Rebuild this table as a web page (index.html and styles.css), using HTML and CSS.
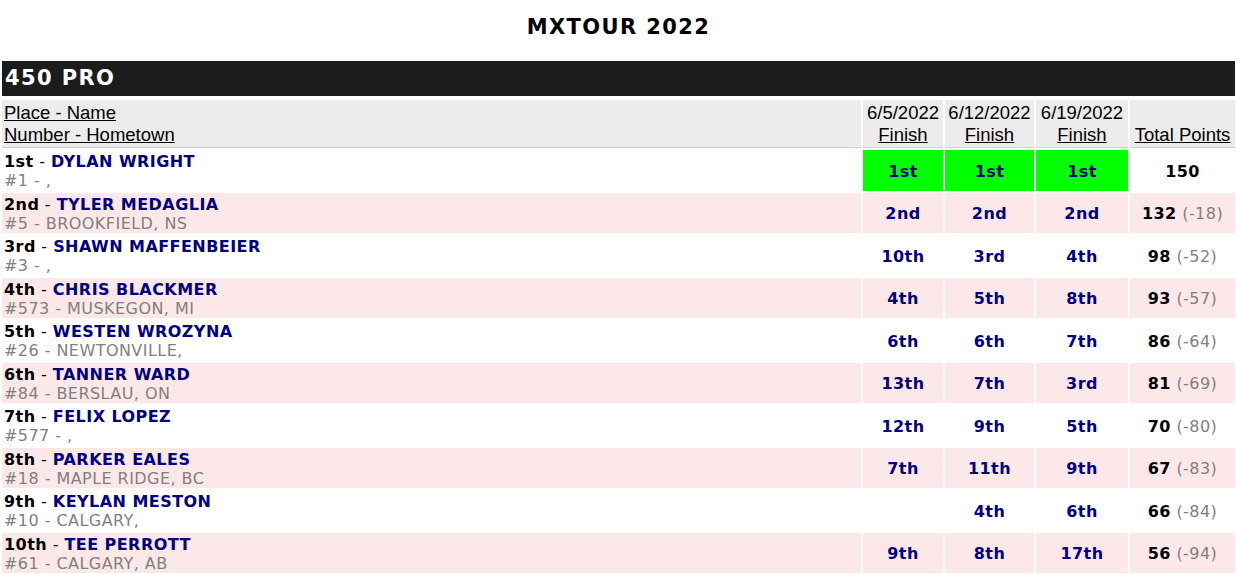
FILE: index.html
```html
<!DOCTYPE html>
<html lang="en">
<head>
<meta charset="utf-8">
<title>MXTOUR 2022</title>
<link rel="stylesheet" href="styles.css">
</head>
<body>
<h1 class="page-title">MXTOUR 2022</h1>
<h2 class="class-bar">450 PRO</h2>
<table class="standings">
  <colgroup>
    <col>
    <col class="c-r1">
    <col class="c-r2">
    <col class="c-r3">
    <col class="c-tot">
  </colgroup>
  <thead>
    <tr>
      <th class="h-name"><a href="#">Place - Name</a><br><a href="#">Number - Hometown</a></th>
      <th>6/5/2022<br><a href="#">Finish</a></th>
      <th>6/12/2022<br><a href="#">Finish</a></th>
      <th>6/19/2022<br><a href="#">Finish</a></th>
      <th><a href="#">Total Points</a></th>
    </tr>
  </thead>
  <tbody>
    <tr>
      <td class="rider"><b>1st</b> - <span class="nm">DYLAN WRIGHT</span><br><span class="ht">#1 - ,</span></td>
      <td class="fin win">1st</td><td class="fin win">1st</td><td class="fin win">1st</td>
      <td class="tot"><b>150</b></td>
    </tr>
    <tr class="alt">
      <td class="rider"><b>2nd</b> - <span class="nm">TYLER MEDAGLIA</span><br><span class="ht">#5 - BROOKFIELD, NS</span></td>
      <td class="fin">2nd</td><td class="fin">2nd</td><td class="fin">2nd</td>
      <td class="tot"><b>132</b> <span class="diff">(-18)</span></td>
    </tr>
    <tr>
      <td class="rider"><b>3rd</b> - <span class="nm">SHAWN MAFFENBEIER</span><br><span class="ht">#3 - ,</span></td>
      <td class="fin">10th</td><td class="fin">3rd</td><td class="fin">4th</td>
      <td class="tot"><b>98</b> <span class="diff">(-52)</span></td>
    </tr>
    <tr class="alt">
      <td class="rider"><b>4th</b> - <span class="nm">CHRIS BLACKMER</span><br><span class="ht">#573 - MUSKEGON, MI</span></td>
      <td class="fin">4th</td><td class="fin">5th</td><td class="fin">8th</td>
      <td class="tot"><b>93</b> <span class="diff">(-57)</span></td>
    </tr>
    <tr>
      <td class="rider"><b>5th</b> - <span class="nm">WESTEN WROZYNA</span><br><span class="ht">#26 - NEWTONVILLE,</span></td>
      <td class="fin">6th</td><td class="fin">6th</td><td class="fin">7th</td>
      <td class="tot"><b>86</b> <span class="diff">(-64)</span></td>
    </tr>
    <tr class="alt">
      <td class="rider"><b>6th</b> - <span class="nm">TANNER WARD</span><br><span class="ht">#84 - BERSLAU, ON</span></td>
      <td class="fin">13th</td><td class="fin">7th</td><td class="fin">3rd</td>
      <td class="tot"><b>81</b> <span class="diff">(-69)</span></td>
    </tr>
    <tr>
      <td class="rider"><b>7th</b> - <span class="nm">FELIX LOPEZ</span><br><span class="ht">#577 - ,</span></td>
      <td class="fin">12th</td><td class="fin">9th</td><td class="fin">5th</td>
      <td class="tot"><b>70</b> <span class="diff">(-80)</span></td>
    </tr>
    <tr class="alt">
      <td class="rider"><b>8th</b> - <span class="nm">PARKER EALES</span><br><span class="ht">#18 - MAPLE RIDGE, BC</span></td>
      <td class="fin">7th</td><td class="fin">11th</td><td class="fin">9th</td>
      <td class="tot"><b>67</b> <span class="diff">(-83)</span></td>
    </tr>
    <tr>
      <td class="rider"><b>9th</b> - <span class="nm">KEYLAN MESTON</span><br><span class="ht">#10 - CALGARY,</span></td>
      <td class="fin"></td><td class="fin">4th</td><td class="fin">6th</td>
      <td class="tot"><b>66</b> <span class="diff">(-84)</span></td>
    </tr>
    <tr class="alt">
      <td class="rider"><b>10th</b> - <span class="nm">TEE PERROTT</span><br><span class="ht">#61 - CALGARY, AB</span></td>
      <td class="fin">9th</td><td class="fin">8th</td><td class="fin">17th</td>
      <td class="tot"><b>56</b> <span class="diff">(-94)</span></td>
    </tr>
  </tbody>
</table>
</body>
</html>
```
FILE: styles.css
```css
html, body {
  margin: 0;
  padding: 0;
  background: #ffffff;
}

body {
  font-family: "DejaVu Sans", Verdana, sans-serif;
  color: #000000;
}

.page-title {
  margin: 0;
  padding: 14px 0 0;
  height: 61px;
  box-sizing: border-box;
  text-align: center;
  font-size: 21px;
  line-height: 26px;
  font-weight: bold;
  letter-spacing: 1.4px;
}

.class-bar {
  margin: 0 2px;
  height: 35px;
  padding: 0 3px;
  background: #1c1c1c;
  color: #ffffff;
  font-size: 21px;
  line-height: 35px;
  font-weight: bold;
  letter-spacing: 1.4px;
}

.standings {
  width: 100%;
  margin-top: 2px;
  border-spacing: 2px;
  font-size: 16px;
  letter-spacing: 0.45px;
}

.c-r1 { width: 80px; }
.c-r2 { width: 89px; }
.c-r3 { width: 92px; }
.c-tot { width: 105px; }

.standings th {
  background: #ececec;
  font-family: "Liberation Sans", Arial, sans-serif;
  font-weight: normal;
  font-size: 18.5px;
  line-height: 22px;
  letter-spacing: 0;
  padding: 2px 2px 1px;
  border-bottom: 1px solid #cfcfcf;
  vertical-align: bottom;
  text-align: center;
  white-space: nowrap;
}

.standings th.h-name {
  text-align: left;
}

.standings th a {
  color: #000000;
  text-decoration: underline;
}

.standings td {
  padding: 2px 2px 0;
  line-height: 19.25px;
  vertical-align: middle;
}

.standings tr.alt td {
  background: #fce8e8;
}

.rider b {
  color: #000000;
}

.nm {
  color: #000080;
  font-weight: bold;
}

.ht {
  color: #808080;
}

.fin {
  text-align: center;
  color: #000080;
  font-weight: bold;
}

.standings td.win {
  background: #00ff00;
}

.tot {
  text-align: center;
  white-space: nowrap;
}

.diff {
  color: #808080;
}
```
